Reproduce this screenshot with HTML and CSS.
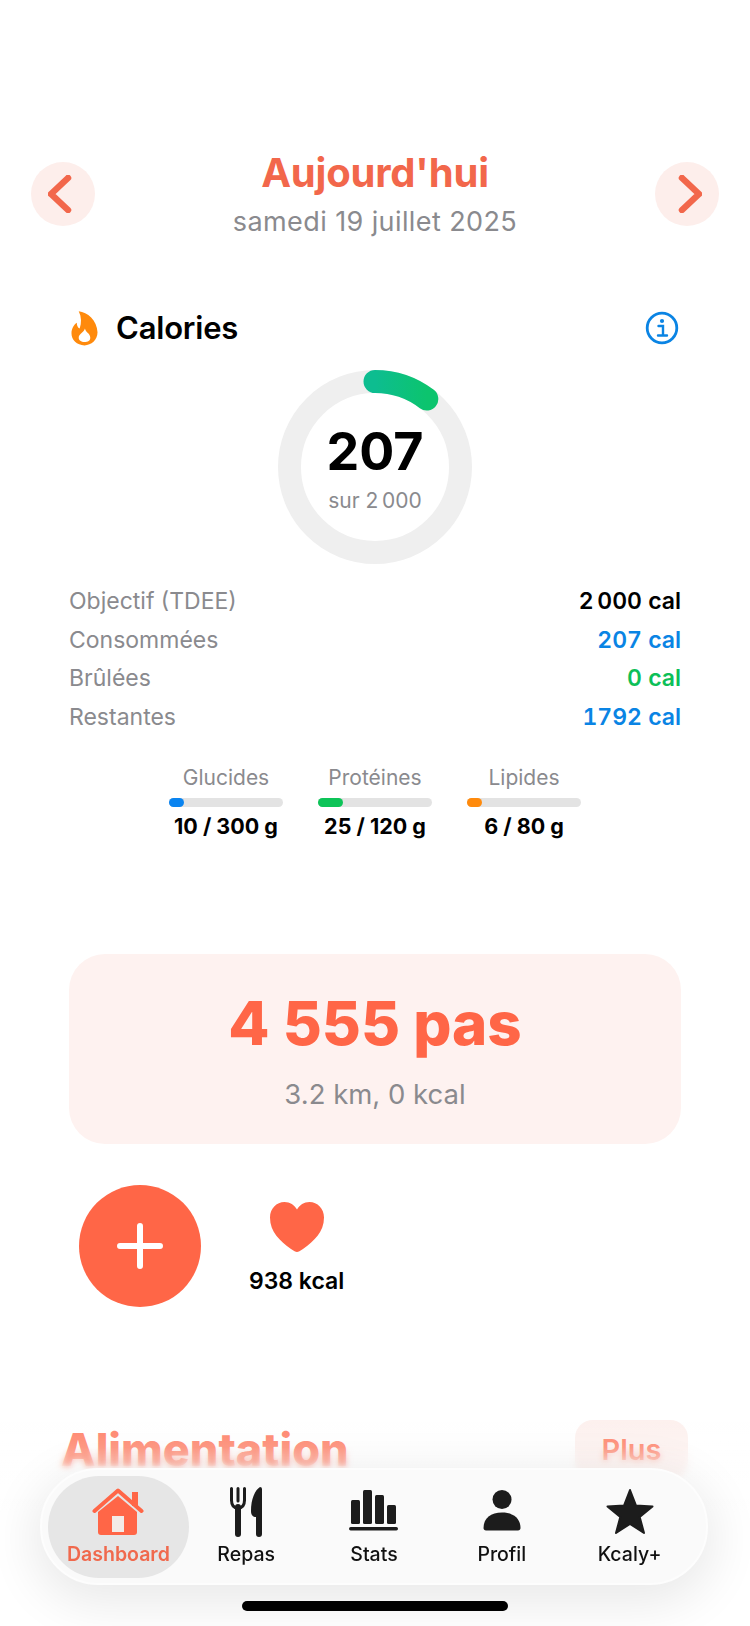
FILE: index.html
```html
<!DOCTYPE html>
<html lang="fr">

<head>
    <meta charset="UTF-8">
    <meta name="viewport" content="width=device-width, initial-scale=1.0">
    <title>Kcaly</title>
    <link rel="stylesheet" href="styles.css">
</head>

<body>
    <div id="screen">
        <div class="date-nav">
            <button class="nav-btn">
                <svg width="30" height="38" viewBox="0 0 30 38"><path d="M20 3 3 19 20 35" class="chevron" /></svg>
            </button>
            <div class="date-text">
                <h1>Aujourd'hui</h1>
                <p>samedi 19 juillet 2025</p>
            </div>
            <button class="nav-btn">
                <svg width="30" height="38" viewBox="0 0 30 38"><path d="M10 3 27 19 10 35" class="chevron" /></svg>
            </button>
        </div>

        <div class="calories-head">
            <div class="calories-title">
                <svg width="27" height="35" viewBox="0 0 28 36">
                    <path d="M8 0C17 1 27 9 27.500 22 27.500 30 21 35.500 14 35.500 6 35.500 .5 30 .5 23 .5 18 3 14 6 12 6 15 7 17 9 18 11 12 11 6 8 0Z" fill="#ff8a0c" />
                    <path d="M14.500 18C15 22 20 23 20 27.500 20 30.500 17.500 32 14 32 10.500 32 8 30 8 27.500 8 23.500 13 22.500 14.500 18Z" fill="#fff" />
                </svg>
                <h2>Calories</h2>
            </div>
            <svg width="34" height="34" viewBox="0 0 34 34">
                <circle cx="17" cy="17" r="14.800" fill="none" stroke="#0a84e4" stroke-width="2.800" />
                <circle cx="17" cy="10" r="2.100" fill="#0a84e4" />
                <path d="M13.500 15H18V24M13 24.500H22" fill="none" stroke="#0a84e4" stroke-width="2.400" stroke-linecap="round" />
            </svg>
        </div>

        <div class="ring">
            <svg class="ring-svg" width="194" height="194" viewBox="0 0 194 194">
                <defs>
                    <linearGradient id="arcGrad" x1="0" y1="0" x2="1" y2="0">
                        <stop offset="0" stop-color="#0dbd90" />
                        <stop offset="1" stop-color="#0cc46e" />
                    </linearGradient>
                </defs>
                <circle cx="97" cy="97" r="85.500" fill="none" stroke="#efefef" stroke-width="23" />
                <path d="M97 11.500A85.500 85.500 0 0 1 148.800 29" fill="none" stroke="url(#arcGrad)" stroke-width="23" stroke-linecap="round" />
            </svg>
            <div class="ring-value">207</div>
            <div class="ring-goal">sur 2&#8239;000</div>
        </div>

        <div class="stats">
            <div class="stat-row"><span>Objectif (TDEE)</span><b>2&#8239;000 cal</b></div>
            <div class="stat-row"><span>Consommées</span><b class="blue">207 cal</b></div>
            <div class="stat-row"><span>Brûlées</span><b class="green">0 cal</b></div>
            <div class="stat-row"><span>Restantes</span><b class="blue">1792 cal</b></div>
        </div>

        <div class="macros">
            <div class="macro">
                <span class="macro-name">Glucides</span>
                <div class="bar"><div class="bar-fill fill-blue" style="width: 15px"></div></div>
                <b>10 / 300 g</b>
            </div>
            <div class="macro">
                <span class="macro-name">Protéines</span>
                <div class="bar"><div class="bar-fill fill-green" style="width: 25px"></div></div>
                <b>25 / 120 g</b>
            </div>
            <div class="macro">
                <span class="macro-name">Lipides</span>
                <div class="bar"><div class="bar-fill fill-orange" style="width: 15px"></div></div>
                <b>6 / 80 g</b>
            </div>
        </div>

        <div class="steps-card">
            <div class="steps-count">4 555 pas</div>
            <div class="steps-sub">3.2 km, 0 kcal</div>
        </div>

        <div class="actions">
            <button class="add-btn">
                <svg width="46" height="46" viewBox="0 0 46 46"><path d="M23 3V43M3 23H43" fill="none" stroke="#fff" stroke-width="6" stroke-linecap="round" /></svg>
            </button>
            <div class="burned">
                <svg width="54" height="50" viewBox="0 0 54 50">
                    <path d="M27 50C25.500 50 24 49 21 47 10 39 0 30 0 15.500 0 6.500 6.500 0 14.500 0 20 0 24.500 3 27 7.500 29.500 3 34 0 39.500 0 47.500 0 54 6.500 54 15.500 54 30 44 39 33 47 30 49 28.500 50 27 50Z" fill="#ff6647" />
                </svg>
                <span>938 kcal</span>
            </div>
        </div>

        <div class="section-head">
            <h2>Alimentation</h2>
            <button class="more-btn">Plus</button>
        </div>

        <div class="bottom-blur"></div>
        <div class="bottom-fade"></div>

        <nav class="tabbar">
            <div class="tab active">
                <svg width="52" height="50" viewBox="0 0 52 50">
                    <path d="M40 5h6v14h-6z" fill="#ff6647" />
                    <path d="M26 9 45 25V45a3 3 0 0 1-3 3H9a3 3 0 0 1-3-3V25Z" fill="#ff6647" />
                    <rect x="20" y="29" width="12" height="16" fill="#f3ebe7" />
                    <path d="M2.500 24 26 3.500 49.500 24" fill="none" stroke="#ff6647" stroke-width="4" stroke-linecap="round" stroke-linejoin="round" />
                </svg>
                <span>Dashboard</span>
            </div>
            <div class="tab">
                <svg width="32" height="50" viewBox="0 0 32 50">
                    <path d="M1.500 1.500V14M8 1.500V14M14.500 1.500V14M1.500 13C1.500 19 4.500 21 8 21 11.500 21 14.500 19 14.500 13" fill="none" stroke="#1c1c1c" stroke-width="3" stroke-linecap="round" />
                    <path d="M8 20V47" fill="none" stroke="#1c1c1c" stroke-width="6" stroke-linecap="round" />
                    <path d="M30 0C25 3 21 12 21 24 21 28 23 30 26 30V47a3 3 0 0 0 6 0V2a2 2 0 0 0-2-2Z" fill="#1c1c1c" />
                </svg>
                <span>Repas</span>
            </div>
            <div class="tab">
                <svg width="50" height="50" viewBox="0 0 50 50">
                    <rect x="2" y="13" width="9" height="24" rx="1.500" fill="#1c1c1c" />
                    <rect x="14" y="3" width="9" height="34" rx="1.500" fill="#1c1c1c" />
                    <rect x="26" y="8" width="9" height="29" rx="1.500" fill="#1c1c1c" />
                    <rect x="38" y="18" width="9" height="19" rx="1.500" fill="#1c1c1c" />
                    <rect x="0" y="40" width="49" height="3.500" rx="1.700" fill="#1c1c1c" />
                </svg>
                <span>Stats</span>
            </div>
            <div class="tab">
                <svg width="38" height="50" viewBox="0 0 38 50">
                    <circle cx="19" cy="12.500" r="9.500" fill="#1c1c1c" />
                    <path d="M.5 41C.5 31 8 25.500 19 25.500 30 25.500 37.500 31 37.500 41 37.500 42.500 36.500 43.500 35 43.500H3C1.500 43.500 .5 42.500 .5 41Z" fill="#1c1c1c" />
                </svg>
                <span>Profil</span>
            </div>
            <div class="tab">
                <svg width="50" height="50" viewBox="0 0 50 50">
                    <path d="M25 3 31 18.500 47.500 19.500 34.700 30 39 46 25 37 11 46 15.300 30 2.500 19.500 19 18.500Z" fill="#1c1c1c" stroke="#1c1c1c" stroke-width="2" stroke-linejoin="round" />
                </svg>
                <span>Kcaly+</span>
            </div>
        </nav>

        <div class="home-bar"></div>
    </div>
</body>

</html>
```

FILE: styles.css
```css
* {
    padding: 0;
    margin: 0;
    box-sizing: border-box;
}

html,
body {
    width: 750px;
    height: 1626px;
    overflow: hidden;
    background-color: #fff;
}

#screen {
    position: relative;
    width: 750px;
    height: 1626px;
    overflow: hidden;
    padding-top: 148px;
    font-family: Inter, "Liberation Sans", sans-serif;
    color: #000;
}

button {
    border: 0;
    font-family: inherit;
}

.date-nav {
    display: flex;
    justify-content: space-between;
    align-items: center;
    padding: 0 31px;
}

.nav-btn {
    width: 64px;
    height: 64px;
    border-radius: 50%;
    background-color: #fdeeeb;
    display: flex;
    align-items: center;
    justify-content: center;
}

.chevron {
    fill: none;
    stroke: #f2674b;
    stroke-width: 6.5;
    stroke-linecap: round;
    stroke-linejoin: round;
}

.date-text {
    text-align: center;
}

.date-text h1 {
    font-size: 40px;
    line-height: 50px;
    font-weight: 700;
    letter-spacing: -0.2px;
    color: #f2674b;
}

.date-text p {
    margin-top: 7px;
    font-size: 27px;
    line-height: 34px;
    letter-spacing: 0.4px;
    color: #8a8a8e;
}

.calories-head {
    display: flex;
    justify-content: space-between;
    align-items: center;
    margin-top: 71px;
    padding: 0 71px;
    height: 36px;
}

.calories-title {
    display: flex;
    align-items: center;
    gap: 18px;
}

.calories-title h2 {
    font-size: 31px;
    line-height: 36px;
    font-weight: 600;
    letter-spacing: -0.2px;
}

.ring {
    position: relative;
    width: 194px;
    height: 194px;
    margin: 24px auto 0;
    display: flex;
    flex-direction: column;
    align-items: center;
}

.ring-svg {
    position: absolute;
    top: 0;
    left: 0;
}

.ring-value {
    position: relative;
    margin-top: 52px;
    font-size: 52px;
    line-height: 60px;
    font-weight: 700;
}

.ring-goal {
    position: relative;
    margin-top: 6px;
    font-size: 21px;
    line-height: 26px;
    color: #8a8a8e;
}

.stats {
    margin-top: 18px;
    padding: 0 69px;
}

.stat-row {
    display: flex;
    justify-content: space-between;
    height: 38.7px;
    line-height: 39px;
    font-size: 23px;
    color: #8a8a8e;
}

.stat-row b {
    font-weight: 600;
    font-variant-numeric: tabular-nums;
    color: #000;
}

.stat-row .blue {
    color: #0a84e4;
}

.stat-row .green {
    color: #0dbf58;
}

.macros {
    display: flex;
    justify-content: center;
    gap: 35px;
    margin-top: 27px;
}

.macro {
    width: 114px;
    display: flex;
    flex-direction: column;
    align-items: center;
}

.macro-name {
    font-size: 21px;
    line-height: 28px;
    color: #8a8a8e;
}

.macro b {
    margin-top: 6px;
    font-size: 21.5px;
    line-height: 26px;
    font-weight: 700;
    white-space: nowrap;
}

.bar {
    width: 114px;
    height: 9px;
    margin-top: 6px;
    border-radius: 5px;
    background-color: #e3e3e3;
}

.bar-fill {
    height: 9px;
    border-radius: 5px;
}

.fill-blue {
    background-color: #0a84f0;
}

.fill-green {
    background-color: #0dc458;
}

.fill-orange {
    background-color: #ff8a0c;
}

.steps-card {
    height: 190px;
    margin: 115px 69px 0;
    border-radius: 36px;
    background-color: #fef2f0;
    display: flex;
    flex-direction: column;
    align-items: center;
    padding-top: 31px;
}

.steps-count {
    font-size: 60px;
    line-height: 76px;
    font-weight: 800;
    color: #ff6647;
}

.steps-sub {
    margin-top: 16px;
    font-size: 27.5px;
    line-height: 34px;
    color: #8a8a8e;
}

.actions {
    display: flex;
    align-items: flex-start;
    gap: 48px;
    margin-top: 41px;
    padding-left: 79px;
}

.add-btn {
    width: 122px;
    height: 122px;
    border-radius: 50%;
    background-color: #ff6647;
    display: flex;
    align-items: center;
    justify-content: center;
}

.burned {
    display: flex;
    flex-direction: column;
    align-items: center;
    padding-top: 17px;
}

.burned span {
    margin-top: 15px;
    font-size: 23px;
    line-height: 28px;
    font-weight: 600;
}

.section-head {
    display: flex;
    justify-content: space-between;
    align-items: center;
    margin-top: 113px;
    padding: 0 62px 0 61px;
}

.section-head h2 {
    font-size: 45px;
    line-height: 60px;
    font-weight: 800;
    color: #ff6647;
}

.more-btn {
    width: 113px;
    height: 60px;
    border-radius: 18px;
    background-color: #fdeeeb;
    font-size: 29px;
    font-weight: 600;
    color: #ff6647;
}

/* flou seulement vers le bas, le haut du titre reste net */
.bottom-blur {
    position: absolute;
    left: 0;
    right: 0;
    top: 1446px;
    bottom: 0;
    backdrop-filter: blur(3px);
    mask-image: linear-gradient(transparent, #000 22px);
}

.bottom-fade {
    position: absolute;
    left: 0;
    right: 0;
    bottom: 0;
    height: 226px;
    background: linear-gradient(rgba(255, 255, 255, 0), rgba(255, 255, 255, 0.25) 14%, rgba(255, 255, 255, 0.45) 30%, rgba(255, 255, 255, 0.9) 55%);
}

.tabbar {
    position: absolute;
    left: 40px;
    top: 1468px;
    width: 668px;
    height: 117px;
    border-radius: 58px;
    border: 2px solid #fdfdfd;
    background-color: #fafafa;
    box-shadow: 0 12px 50px 6px rgba(0, 0, 0, 0.09);
    display: flex;
    align-items: center;
    padding: 0 12.5px;
}

.tab {
    width: 128px;
    height: 102px;
    padding-top: 11px;
    display: flex;
    flex-direction: column;
    align-items: center;
    font-size: 19.5px;
    line-height: 24px;
    font-weight: 500;
    color: #111;
}

.tab span {
    margin-top: 5px;
}

.tab.active {
    width: 141px;
    margin: 0 -6.5px;
    border-radius: 51px;
    background-color: #e6e6e6;
    color: #f0694d;
    font-weight: 600;
}

.home-bar {
    position: absolute;
    left: 242px;
    top: 1601px;
    width: 266px;
    height: 10px;
    border-radius: 5px;
    background-color: #000;
}
```
